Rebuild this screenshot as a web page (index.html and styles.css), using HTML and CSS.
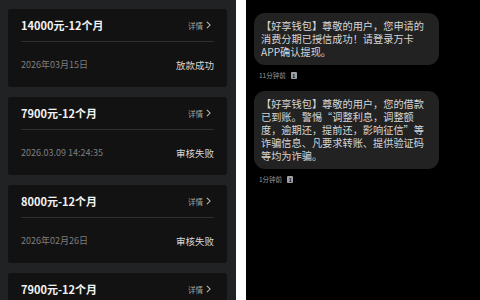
FILE: index.html
```html
<!DOCTYPE html>
<html lang="zh-CN">
<head>
<meta charset="utf-8">
<title>借款记录</title>
<link rel="stylesheet" href="styles.css">
</head>
<body>
<div class="page">
  <section class="left">
    <div class="card">
      <div class="card-head">
        <span class="title">14000元-12个月</span>
        <span class="detail">详情<svg class="chev" viewBox="0 0 6 10" width="5" height="8"><path d="M1 1 L5 5 L1 9" fill="none" stroke="#bdbdbd" stroke-width="1.3"/></svg></span>
      </div>
      <div class="divider"></div>
      <div class="card-foot">
        <span class="date">2026年03月15日</span>
        <span class="status">放款成功</span>
      </div>
    </div>
    <div class="card">
      <div class="card-head">
        <span class="title">7900元-12个月</span>
        <span class="detail">详情<svg class="chev" viewBox="0 0 6 10" width="5" height="8"><path d="M1 1 L5 5 L1 9" fill="none" stroke="#bdbdbd" stroke-width="1.3"/></svg></span>
      </div>
      <div class="divider"></div>
      <div class="card-foot">
        <span class="date">2026.03.09 14:24:35</span>
        <span class="status">审核失败</span>
      </div>
    </div>
    <div class="card">
      <div class="card-head">
        <span class="title">8000元-12个月</span>
        <span class="detail">详情<svg class="chev" viewBox="0 0 6 10" width="5" height="8"><path d="M1 1 L5 5 L1 9" fill="none" stroke="#bdbdbd" stroke-width="1.3"/></svg></span>
      </div>
      <div class="divider"></div>
      <div class="card-foot">
        <span class="date">2026年02月26日</span>
        <span class="status">审核失败</span>
      </div>
    </div>
    <div class="card">
      <div class="card-head">
        <span class="title">7900元-12个月</span>
        <span class="detail">详情<svg class="chev" viewBox="0 0 6 10" width="5" height="8"><path d="M1 1 L5 5 L1 9" fill="none" stroke="#bdbdbd" stroke-width="1.3"/></svg></span>
      </div>
      <div class="divider"></div>
      <div class="card-foot">
        <span class="date">2026年02月20日</span>
        <span class="status">审核失败</span>
      </div>
    </div>
  </section>
  <div class="sep"></div>
  <section class="right">
    <div class="msg">
      <div class="bubble">【好享钱包】尊敬的用户，您申请的<br>消费分期已授信成功！请登录万卡<br>APP确认提现。</div>
      <div class="meta"><span class="time">11分钟前</span><span class="sim">1</span></div>
    </div>
    <div class="msg">
      <div class="bubble">【好享钱包】尊敬的用户，您的借款<br>已到账。警惕“调整利息，调整额<br>度，逾期还，提前还，影响征信”等<br>诈骗信息、凡要求转账、提供验证码<br>等均为诈骗。</div>
      <div class="meta"><span class="time">1分钟前</span><span class="sim">1</span></div>
    </div>
  </section>
</div>
</body>
</html>
```
FILE: styles.css
```css
* { box-sizing: border-box; }
html, body { margin: 0; padding: 0; }
body {
  background: #ffffff;
  font-family: "Noto Sans CJK SC", "Noto Sans", sans-serif;
  width: 480px;
  height: 300px;
  overflow: hidden;
}
.page {
  display: flex;
  width: 480px;
  height: 300px;
}
.left {
  width: 236px;
  height: 300px;
  background: #212224;
  padding: 9px 9px 0 8px;
  display: flex;
  flex-direction: column;
  gap: 10px;
  overflow: hidden;
}
.sep {
  width: 10px;
  background: #ffffff;
}
.card {
  flex: 0 0 78px;
  height: 78px;
  background: #121212;
  border-radius: 3px;
  padding: 0 13px;
  display: flex;
  flex-direction: column;
}
.card-head {
  height: 32px;
  display: flex;
  align-items: center;
  justify-content: space-between;
}
.title {
  color: #f2f2f2;
  font-size: 11px;
  font-weight: 700;
  line-height: 14px;
}
.detail {
  color: #a8a8a8;
  font-size: 7.5px;
  display: flex;
  align-items: center;
  gap: 3px;
  margin-right: 3px;
}
.chev { display: block; }
.divider {
  height: 1px;
  background: #2f2f30;
}
.card-foot {
  height: 45px;
  display: flex;
  align-items: center;
  justify-content: space-between;
}
.date {
  color: #7e7e7e;
  font-size: 9px;
}
.status {
  color: #d8d8d8;
  font-size: 9.5px;
}
.right {
  flex: 1;
  height: 300px;
  background: #000000;
  padding: 13px 0 0 8px;
  display: flex;
  flex-direction: column;
  gap: 10px;
}
.msg {
  display: flex;
  flex-direction: column;
}
.bubble {
  width: 185px;
  background: #222222;
  border-radius: 11px;
  padding: 6px 5px 6px 7px;
  color: #d6d6d6;
  font-size: 10.2px;
  line-height: 13.2px;
  white-space: nowrap;
}
.meta {
  display: flex;
  align-items: center;
  gap: 5px;
  margin-top: 6px;
  padding-left: 5px;
  height: 10px;
}
.time {
  color: #9a9a9a;
  font-size: 6.5px;
  line-height: 9px;
}
.sim {
  width: 6px;
  height: 7px;
  background: #a0a0a0;
  color: #000;
  font-size: 5px;
  line-height: 7px;
  text-align: center;
  border-radius: 1px;
  font-weight: 700;
}
```
